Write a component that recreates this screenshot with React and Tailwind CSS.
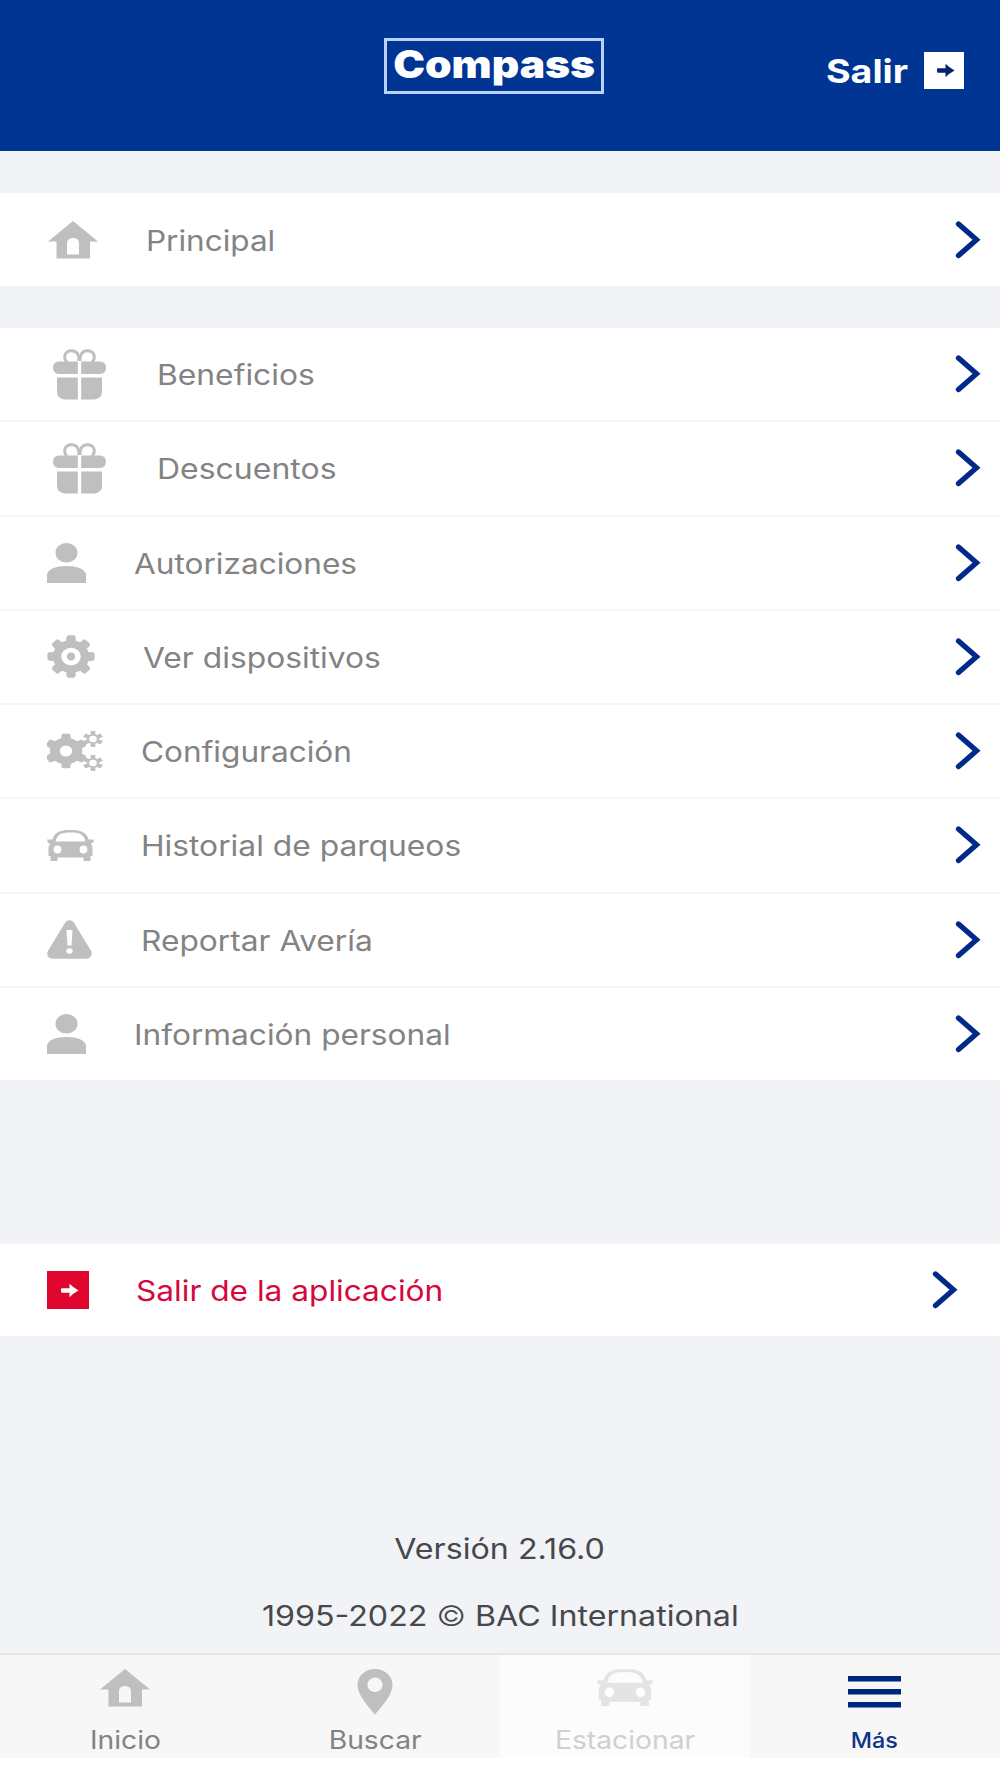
import clsx from "clsx";

// outline of a toothed wheel, rx and ry differ because the wheel is a bit wide
function gearPath(cx, cy, rx, ry, teeth, depth) {
  const step = (Math.PI * 2) / teeth;
  const points = [];
  for (let i = 0; i < teeth; i++) {
    const a = i * step - Math.PI / 2;
    [
      [-0.5, depth],
      [-0.22, depth],
      [-0.14, 1],
      [0.14, 1],
      [0.22, depth],
    ].forEach(([offset, r]) => {
      const x = cx + Math.cos(a + offset * step) * rx * r;
      const y = cy + Math.sin(a + offset * step) * ry * r;
      points.push(`${x.toFixed(2)} ${y.toFixed(2)}`);
    });
  }
  return `M${points.join("L")}Z`;
}

function HomeIcon() {
  return (
    <svg width="50" height="38" viewBox="0 0 50 38" fill="currentColor">
      <path
        fillRule="evenodd"
        d="M25 0L50 20.5H42V37.5H8.5V20.5H0ZM19 33.5H31V22Q30.5 17 25 17Q19.500 17 19 22Z"
      />
    </svg>
  );
}

function GiftIcon() {
  return (
    <svg width="53" height="51" viewBox="0 0 53 51" fill="currentColor">
      <g fill="none" stroke="currentColor" strokeWidth="3">
        <path d="M14 13.500C9.500 8 12 1.800 18.500 1.800C24 1.800 26.500 6 26 12" />
        <path d="M39 13.500C43.500 8 41 1.800 34.500 1.800C29 1.800 26.500 6 27 12" />
      </g>
      <path d="M6 12.500H24.800V25H6Q0 24.500 0 18.800Q0 13 6 12.500Z" />
      <path d="M28.200 12.500H47Q53 13 53 18.800Q53 24.500 47 25H28.200Z" />
      <path d="M4 28.500H24.800V50.500H12Q4 50 4 42.500Z" />
      <path d="M28.200 28.500H49V42.500Q49 50 41 50.500H28.200Z" />
    </svg>
  );
}

function PersonIcon() {
  return (
    <svg width="39" height="40" viewBox="0 0 39 40" fill="currentColor">
      <ellipse cx="19.500" cy="9.800" rx="11" ry="9.800" />
      <path d="M0 40V31Q3 23 19.500 23Q36 23 39 31V40Z" />
    </svg>
  );
}

function GearIcon() {
  return (
    <svg width="48" height="43" viewBox="0 0 48 43">
      <path
        d={gearPath(24, 21.5, 21.5, 19, 8, 0.74)}
        fill="currentColor"
        stroke="currentColor"
        strokeWidth="4.500"
        strokeLinejoin="round"
      />
      <ellipse cx="24" cy="21.500" rx="9.800" ry="8.800" fill="white" />
      <circle cx="24" cy="21.500" r="4" fill="currentColor" />
    </svg>
  );
}

function GearsIcon() {
  return (
    <svg width="57" height="40" viewBox="0 0 57 40" fill="currentColor" stroke="currentColor">
      <path d={gearPath(19, 20, 20, 16, 6, 0.74)} strokeWidth="3" strokeLinejoin="round" />
      <ellipse cx="19" cy="20" rx="6.200" ry="5.500" fill="white" stroke="none" />
      <path d={gearPath(46, 8, 9, 7, 6, 0.6)} strokeWidth="2" />
      <ellipse cx="46" cy="8" rx="3.800" ry="3.200" fill="white" stroke="none" />
      <path d={gearPath(46, 32, 9, 7, 6, 0.6)} strokeWidth="2" />
      <ellipse cx="46" cy="32" rx="3.800" ry="3.200" fill="white" stroke="none" />
    </svg>
  );
}

function CarIcon({ className }) {
  return (
    <svg className={className} viewBox="0 0 47 31" fill="currentColor" preserveAspectRatio="none">
      <path
        fillRule="evenodd"
        d="M0 9.500H5.500C7.500 2.500 12 0 23.500 0C35 0 39.500 2.500 41.500 9.500H47L46 13L43.800 13.500Q45.500 16 45.500 18V26H43.500V31H36.500V27.500H10.500V31H3.500V26H1.500V18Q1.500 16 3.200 13.500L1 13ZM8.500 11.500H38.500C37 5 33.500 2.600 23.500 2.600C13.500 2.600 10 5 8.500 11.500Z"
      />
      <ellipse cx="10.500" cy="19.500" rx="3.900" ry="4" fill="white" />
      <ellipse cx="36.500" cy="19.500" rx="3.900" ry="4" fill="white" />
    </svg>
  );
}

function WarningIcon() {
  return (
    <svg width="45" height="39" viewBox="0 0 45 39">
      <path
        d="M22.500 5.500L39.500 33.500H5.500Z"
        fill="currentColor"
        stroke="currentColor"
        strokeWidth="10.500"
        strokeLinejoin="round"
      />
      <path d="M19.500 10H25.500L24.500 25.500H20.500Z" fill="white" />
      <ellipse cx="22.500" cy="31" rx="3.200" ry="2.700" fill="white" />
    </svg>
  );
}

function PinIcon() {
  return (
    <svg width="36" height="46" viewBox="0 0 36 46" fill="currentColor">
      <path
        fillRule="evenodd"
        d="M18 0C28 0 35.500 7 35.500 16C35.500 26 25 37 18 45.500C11 37 0.500 26 0.500 16C0.500 7 8 0 18 0ZM18 8.500A7.600 7.300 0 1 0 18 23.100A7.600 7.300 0 1 0 18 8.500Z"
      />
    </svg>
  );
}

function MenuIcon() {
  return (
    <svg width="53" height="32" viewBox="0 0 53 32" fill="currentColor">
      <path d="M0 0H53V5.500H0ZM0 13H53V18.500H0ZM0 26H53V31.500H0Z" />
    </svg>
  );
}

function ArrowIcon() {
  return (
    <svg width="19" height="15" viewBox="0 0 20 15">
      <path
        d="M1.500 5.200H10V0.500Q14 4.500 19.500 7.500Q14 10.500 10 14.500V9.800H1.500Q0 7.500 1.500 5.200Z"
        fill="currentColor"
      />
    </svg>
  );
}

function ChevronIcon() {
  return (
    <svg width="26" height="38" viewBox="0 0 26 38" fill="none" className="text-[#00298a]">
      <path
        d="M3.500 3L21.500 18.800L3.500 34.600"
        stroke="currentColor"
        strokeWidth="5.300"
        strokeLinecap="round"
        strokeLinejoin="miter"
      />
    </svg>
  );
}

const menuItems = [
  { label: "Beneficios", icon: <GiftIcon />, pad: "pl-[53px]", box: "w-[104px]", stretch: "scale-x-[1.135]" },
  { label: "Descuentos", icon: <GiftIcon />, pad: "pl-[53px]", box: "w-[104px]", stretch: "scale-x-[1.142]" },
  { label: "Autorizaciones", icon: <PersonIcon />, pad: "pl-[47px]", box: "w-[87px]", stretch: "scale-x-[1.128]" },
  { label: "Ver dispositivos", icon: <GearIcon />, pad: "pl-[47px]", box: "w-[96px]", stretch: "scale-x-[1.135]" },
  { label: "Configuración", icon: <GearsIcon />, pad: "pl-[47px]", box: "w-[94px]", stretch: "scale-x-[1.128]" },
  {
    label: "Historial de parqueos",
    icon: <CarIcon className="h-[31px] w-[47px]" />,
    pad: "pl-[47px]",
    box: "w-[94px]",
    stretch: "scale-x-[1.134]",
  },
  { label: "Reportar Avería", icon: <WarningIcon />, pad: "pl-[47px]", box: "w-[94px]", stretch: "scale-x-[1.132]" },
  { label: "Información personal", icon: <PersonIcon />, pad: "pl-[47px]", box: "w-[87px]", stretch: "scale-x-[1.13]" },
];

const tabs = [
  { label: "Inicio", icon: <HomeIcon /> },
  { label: "Buscar", icon: <PinIcon /> },
  { label: "Estacionar", icon: <CarIcon className="h-[37px] w-[56px]" />, disabled: true },
  { label: "Más", icon: <MenuIcon />, active: true },
];

function MenuRow({ label, icon, pad, box, stretch, className, labelColor = "text-[#838383]" }) {
  return (
    <button className={clsx("flex w-full items-center bg-white text-left", pad, className)}>
      <span className={clsx("shrink-0 text-[#bfbfbf]", box)}>{icon}</span>
      <span className={clsx("origin-left pt-[2px] text-[28px] whitespace-nowrap", stretch, labelColor)}>{label}</span>
      <span className="ml-auto">
        <ChevronIcon />
      </span>
    </button>
  );
}

function Header() {
  return (
    <header className="flex h-[151px] items-start justify-between bg-[#003594] pr-[36px] pl-[384px] text-white">
      <div className="mt-[38px] flex h-[56px] w-[220px] items-center justify-center border-3 border-[#b9d2fb] pb-[4px]">
        <span className="scale-x-[1.12] text-[38px] leading-none font-black">Compass</span>
      </div>
      <button className="mt-[52px] flex h-[37px] items-center">
        <span className="mr-[16px] origin-right scale-x-[1.14] pt-[2px] text-[33px] font-bold">Salir</span>
        <span className="flex h-[37px] w-[40px] items-center justify-center bg-white pl-[2px] text-[#00256e]">
          <ArrowIcon />
        </span>
      </button>
    </header>
  );
}

export default function App() {
  return (
    <div className="flex h-[1778px] w-[1000px] flex-col overflow-hidden bg-[#f2f3f7] font-['Inter','Liberation_Sans',sans-serif]">
      <Header />

      <main className="flex grow flex-col">
        <MenuRow
          label="Principal"
          icon={<HomeIcon />}
          pad="pl-[48px]"
          box="w-[98px]"
          stretch="scale-x-[1.125]"
          className="mt-[42px] h-[93px] pr-[19px]"
        />

        <div className="mt-[42px] flex h-[752px] flex-col">
          {menuItems.map((item, index) => (
            <MenuRow
              key={item.label}
              {...item}
              className={clsx("flex-1 pr-[19px]", index > 0 && "border-t-2 border-[#f6f6f8]")}
            />
          ))}
        </div>

        <MenuRow
          label="Salir de la aplicación"
          icon={
            <span className="flex h-[38px] w-[42px] items-center justify-center bg-[#e0052f] pl-[2px] text-white">
              <ArrowIcon />
            </span>
          }
          pad="pl-[47px]"
          box="w-[89px]"
          stretch="scale-x-[1.13]"
          labelColor="text-[#d6083b]"
          className="mt-[164px] h-[92px] pr-[42px]"
        />

        <footer className="mt-[196px] flex flex-col items-center gap-[33px] text-[28px] leading-[34px] text-[#47484c]">
          <p className="scale-x-[1.15]">Versión 2.16.0</p>
          <p className="scale-x-[1.15]">
            1995-2022 <span className="font-light">©</span> BAC International
          </p>
        </footer>
      </main>

      <nav className="grid h-[105px] shrink-0 grid-cols-4 border-t-2 border-[#e6e6ea] bg-[#f7f7f7]">
        {tabs.map(({ label, icon, disabled, active }) => (
          <button
            key={label}
            disabled={disabled}
            className={clsx(
              "flex flex-col items-center",
              disabled && "bg-[#fcfcfc] text-[#e4e4e4]",
              active && "pr-[2px] text-[#00277f]",
              !disabled && !active && "text-[#bfbfbf]"
            )}
          >
            <span className={clsx("flex", active ? "h-[61px] pt-[21px]" : "h-[60px] pt-[14px]")}>{icon}</span>
            <span
              className={clsx(
                "leading-[50px]",
                active ? "scale-x-[1.11] text-[21px] font-medium text-[#0d3585]" : "scale-x-[1.13] text-[25px]",
                disabled && "text-[#d0d0d0]",
                !disabled && !active && "text-[#838383]"
              )}
            >
              {label}
            </span>
          </button>
        ))}
      </nav>
      <div className="h-[20px] shrink-0 bg-white" />
    </div>
  );
}
